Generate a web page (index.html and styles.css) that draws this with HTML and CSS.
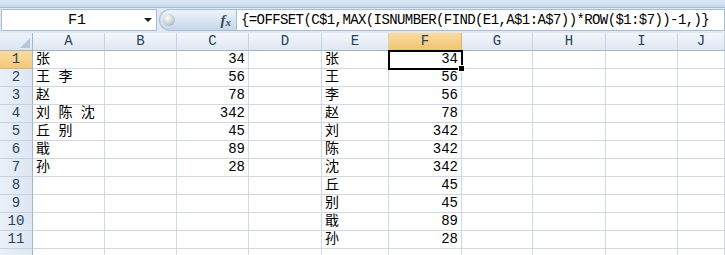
FILE: index.html
```html
<!DOCTYPE html>
<html lang="zh-CN">
<head>
  <meta charset="UTF-8">
  <meta name="viewport" content="width=device-width, initial-scale=1.0">
  <title>OFFSET 拆分姓名</title>
  <link rel="stylesheet" href="styles.css">
</head>
<body>

  <div class="ribbon-edge"></div>

  <!-- 名称框 + 编辑栏 -->
  <div class="formula-bar">
    <div class="name-box">
      <span class="name">F1</span>
      <span class="drop"></span>
    </div>
    <div class="fx-pill">
      <span class="knob"></span>
      <span class="fx">f<sub>x</sub></span>
    </div>
    <div class="formula">{=OFFSET(C$1,MAX(ISNUMBER(FIND(E1,A$1:A$7))*ROW($1:$7))-1,)}</div>
  </div>

  <!-- 工作表 -->
  <div class="sheet">
    <div class="corner"><span class="tri"></span></div>
    <div class="col-head">A</div>
    <div class="col-head">B</div>
    <div class="col-head">C</div>
    <div class="col-head">D</div>
    <div class="col-head">E</div>
    <div class="col-head active">F</div>
    <div class="col-head">G</div>
    <div class="col-head">H</div>
    <div class="col-head">I</div>
    <div class="col-head">J</div>

    <div class="row-head active">1</div>
    <div class="cell">张</div><div class="cell"></div><div class="cell num">34</div><div class="cell"></div>
    <div class="cell">张</div><div class="cell num selected">34<span class="handle"></span></div>
    <div class="cell"></div><div class="cell"></div><div class="cell"></div><div class="cell"></div>

    <div class="row-head">2</div>
    <div class="cell">王 李</div><div class="cell"></div><div class="cell num">56</div><div class="cell"></div>
    <div class="cell">王</div><div class="cell num">56</div>
    <div class="cell"></div><div class="cell"></div><div class="cell"></div><div class="cell"></div>

    <div class="row-head">3</div>
    <div class="cell">赵</div><div class="cell"></div><div class="cell num">78</div><div class="cell"></div>
    <div class="cell">李</div><div class="cell num">56</div>
    <div class="cell"></div><div class="cell"></div><div class="cell"></div><div class="cell"></div>

    <div class="row-head">4</div>
    <div class="cell">刘 陈 沈</div><div class="cell"></div><div class="cell num">342</div><div class="cell"></div>
    <div class="cell">赵</div><div class="cell num">78</div>
    <div class="cell"></div><div class="cell"></div><div class="cell"></div><div class="cell"></div>

    <div class="row-head">5</div>
    <div class="cell">丘 别</div><div class="cell"></div><div class="cell num">45</div><div class="cell"></div>
    <div class="cell">刘</div><div class="cell num">342</div>
    <div class="cell"></div><div class="cell"></div><div class="cell"></div><div class="cell"></div>

    <div class="row-head">6</div>
    <div class="cell">戢</div><div class="cell"></div><div class="cell num">89</div><div class="cell"></div>
    <div class="cell">陈</div><div class="cell num">342</div>
    <div class="cell"></div><div class="cell"></div><div class="cell"></div><div class="cell"></div>

    <div class="row-head">7</div>
    <div class="cell">孙</div><div class="cell"></div><div class="cell num">28</div><div class="cell"></div>
    <div class="cell">沈</div><div class="cell num">342</div>
    <div class="cell"></div><div class="cell"></div><div class="cell"></div><div class="cell"></div>

    <div class="row-head">8</div>
    <div class="cell"></div><div class="cell"></div><div class="cell"></div><div class="cell"></div>
    <div class="cell">丘</div><div class="cell num">45</div>
    <div class="cell"></div><div class="cell"></div><div class="cell"></div><div class="cell"></div>

    <div class="row-head">9</div>
    <div class="cell"></div><div class="cell"></div><div class="cell"></div><div class="cell"></div>
    <div class="cell">别</div><div class="cell num">45</div>
    <div class="cell"></div><div class="cell"></div><div class="cell"></div><div class="cell"></div>

    <div class="row-head">10</div>
    <div class="cell"></div><div class="cell"></div><div class="cell"></div><div class="cell"></div>
    <div class="cell">戢</div><div class="cell num">89</div>
    <div class="cell"></div><div class="cell"></div><div class="cell"></div><div class="cell"></div>

    <div class="row-head">11</div>
    <div class="cell"></div><div class="cell"></div><div class="cell"></div><div class="cell"></div>
    <div class="cell">孙</div><div class="cell num">28</div>
    <div class="cell"></div><div class="cell"></div><div class="cell"></div><div class="cell"></div>

    <!-- 第 12 行只露出顶端 -->
    <div class="row-head"></div>
    <div class="cell"></div><div class="cell"></div><div class="cell"></div><div class="cell"></div>
    <div class="cell"></div><div class="cell"></div>
    <div class="cell"></div><div class="cell"></div><div class="cell"></div><div class="cell"></div>
  </div>

</body>
</html>
```

FILE: styles.css
```css
body {
  margin: 0;
  background: #ffffff;
  font-family: "Liberation Mono", "Noto Sans CJK SC", monospace;
  font-size: 14px;
  color: #000000;
  overflow: hidden;
}
.ribbon-edge {
  height: 7px;
  background: linear-gradient(#dbe7f5, #c9d9ed);
  border-bottom: 1px solid #a9bfd8;
}
.formula-bar {
  display: flex;
  height: 22px;
  padding: 1px 0 2px 1px;
  background: #dfe8f4;
}
.name-box {
  display: flex;
  align-items: center;
  width: 156px;
  background: #ffffff;
  border: 1px solid #a9bcd4;
  box-sizing: border-box;
}
.name {
  flex: 1;
  text-align: center;
  font-size: 15px;
  padding-left: 8px;
}
.drop {
  width: 0;
  height: 0;
  margin-right: 4px;
  border-left: 4px solid transparent;
  border-right: 4px solid transparent;
  border-top: 4px solid #1e1e1e;
}
.fx-pill {
  display: flex;
  align-items: center;
  justify-content: space-between;
  width: 77px;
  margin-left: 2px;
  background: linear-gradient(#eef3fa, #c7d6ea);
  border: 1px solid #a9bcd4;
  border-right: none;
  border-radius: 11px 0 0 11px;
  box-sizing: border-box;
}
.knob {
  width: 12px;
  height: 12px;
  margin-left: 3px;
  border-radius: 50%;
  background: radial-gradient(circle at 40% 35%, #ffffff, #b8bfc9 70%, #9aa3ae);
}
.fx {
  font-family: "Liberation Serif", serif;
  font-style: italic;
  font-weight: bold;
  font-size: 15px;
  color: #3b4a60;
  margin-right: 5px;
}
.fx sub {
  font-size: 11px;
  vertical-align: -1px;
}
.formula {
  flex: 1;
  background: #ffffff;
  border: 1px solid #a9bcd4;
  box-sizing: border-box;
  padding-left: 4px;
  line-height: 20px;
  font-size: 14px;
  letter-spacing: -0.6px;
  white-space: nowrap;
  overflow: hidden;
}
.sheet {
  display: grid;
  grid-template-columns: 33px 72px 72px 72px 73px 67px 73px 71px 73px 72px 1fr;
  grid-auto-rows: 18px;
}
.sheet > div {
  box-sizing: border-box;
  line-height: 17px;
  white-space: nowrap;
  overflow: hidden;
}
.corner {
  position: relative;
  background: linear-gradient(#eef3fa, #dce5f1);
  border-right: 1px solid #9eb6ce;
  border-bottom: 1px solid #9eb6ce;
}
.tri {
  position: absolute;
  right: 2px;
  bottom: 2px;
  width: 0;
  height: 0;
  border-left: 10px solid transparent;
  border-bottom: 10px solid #b7c7dc;
}
.col-head {
  text-align: center;
  color: #27415f;
  background: linear-gradient(#f3f6fb, #dfe7f2);
  border-right: 1px solid #c5d2e3;
  border-bottom: 1px solid #9eb6ce;
}
.row-head {
  text-align: center;
  color: #27415f;
  background: linear-gradient(90deg, #eaf0f8, #dde6f2);
  border-right: 1px solid #9eb6ce;
  border-bottom: 1px solid #c5d2e3;
}
.col-head.active {
  background: linear-gradient(#f9dca4, #f1c46d);
  border-right-color: #e2b25c;
  border-bottom-color: #c8a050;
}
.row-head.active {
  background: linear-gradient(#f9dca4, #f3c976);
  border-bottom-color: #e2b25c;
}
.cell {
  padding: 0 2px 0 3px;
  border-right: 1px solid #d0d7e5;
  border-bottom: 1px solid #d0d7e5;
}
.num {
  text-align: right;
  padding-right: 3px;
}
.sheet > .selected {
  position: relative;
  overflow: visible;
  outline: 2px solid #000000;
  outline-offset: -1px;
  z-index: 1;
}
.handle {
  position: absolute;
  right: -4px;
  bottom: -4px;
  width: 5px;
  height: 5px;
  background: #000000;
  border: 1px solid #ffffff;
}
```
